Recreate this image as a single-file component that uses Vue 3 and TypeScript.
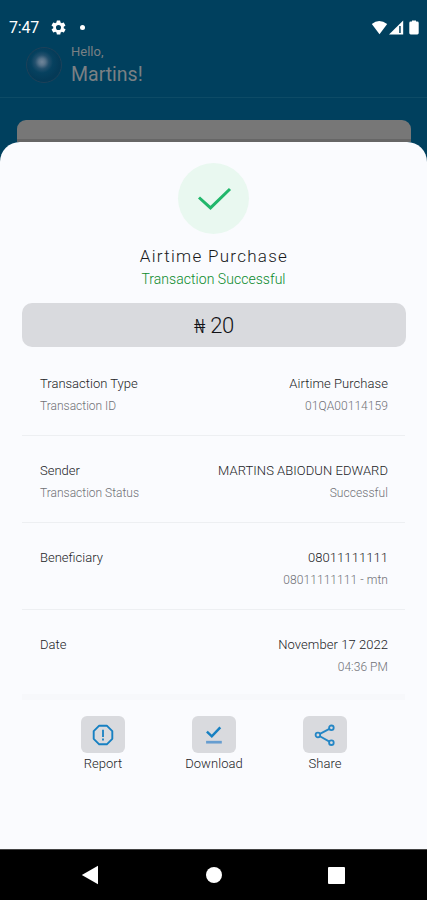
<script setup lang="ts">
interface Detail {
  label: string
  sub: string
  value: string
  subValue: string
  kind: string
}

const details: Detail[] = [
  { label: 'Transaction Type', sub: 'Transaction ID', value: 'Airtime Purchase', subValue: '01QA00114159', kind: 'type' },
  { label: 'Sender', sub: 'Transaction Status', value: 'MARTINS ABIODUN EDWARD', subValue: 'Successful', kind: 'sender' },
  { label: 'Beneficiary', sub: '', value: '08011111111', subValue: '08011111111 - mtn', kind: 'beneficiary' },
  { label: 'Date', sub: '', value: 'November 17 2022', subValue: '04:36 PM', kind: 'date' },
]
</script>

<template>
  <div class="phone">
    <div class="status">
      <span class="clock">7:47</span>
      <svg class="gear" viewBox="0 0 24 24" width="17" height="17">
        <path fill="#fff" fill-rule="evenodd" d="M19.4 13a7.500 7.500 0 0 0 0-2l2.100-1.600a.5.5 0 0 0 .1-.7l-2-3.400a.5.5 0 0 0-.6-.2l-2.500 1a7.300 7.300 0 0 0-1.700-1l-.4-2.600A.5.5 0 0 0 14 2h-4a.5.5 0 0 0-.5.400l-.4 2.700a7.700 7.700 0 0 0-1.700 1l-2.500-1a.5.5 0 0 0-.6.200l-2 3.400a.5.5 0 0 0 .1.700L4.600 11a8 8 0 0 0 0 2l-2.100 1.600a.5.5 0 0 0-.1.700l2 3.400c.1.200.4.300.6.200l2.500-1c.5.400 1.100.700 1.700 1l.4 2.700c0 .2.200.4.500.4h4c.2 0 .5-.2.500-.4l.4-2.700c.6-.3 1.200-.6 1.700-1l2.500 1c.2.100.5 0 .6-.2l2-3.400a.5.5 0 0 0-.1-.7zM12 15.600a3.600 3.600 0 1 1 0-7.200 3.600 3.600 0 0 1 0 7.200z" />
      </svg>
      <span class="dot"></span>
      <svg class="signals" viewBox="0 0 50 16" width="50" height="16">
        <path fill="#fff" d="M.8 4Q8 -1.800 16.200 4L8.500 14.300z" />
        <path fill="#fff" d="M18 14.500 32.200.500V14.500z" />
        <path fill="#00405e" d="M28.200 6h1.500v7h-1.500z" />
        <path fill="#fff" d="M41 1.500V.4h4v1.100h1.300q1.400 0 1.400 1.400v10.200q0 1.400-1.400 1.400h-6.600q-1.400 0-1.400-1.400V2.900q0-1.400 1.400-1.400z" />
      </svg>
    </div>
    <header class="greeting">
      <div class="avatar"></div>
      <div>
        <div class="hello">Hello,</div>
        <div class="name">Martins!</div>
      </div>
    </header>
    <div class="card"></div>

    <main class="sheet">
      <div class="badge">
        <svg viewBox="0 0 71 71" width="71" height="71">
          <path d="M21 34.500 32.500 44.900 52 26" fill="none" stroke="#21b76b" stroke-width="3" />
        </svg>
      </div>
      <h1><span>Airtime Purchase</span></h1>
      <p class="result"><span>Transaction Successful</span></p>
      <div class="amount"><span class="naira">₦</span> 20</div>

      <section class="details">
        <div v-for="d in details" :key="d.label" class="row" :class="d.kind">
          <div class="line"><span class="label">{{ d.label }}</span><span class="value">{{ d.value }}</span></div>
          <div class="line sub"><span class="label">{{ d.sub }}</span><span class="value">{{ d.subValue }}</span></div>
        </div>
      </section>

      <nav class="actions">
        <button class="action" type="button">
          <span class="tile">
            <svg viewBox="0 0 24 24" width="24" height="24" fill="none" stroke="#1780c2">
              <path d="M8.200 2.700h7.600l5.500 5.500v7.600l-5.500 5.500H8.200l-5.500-5.500V8.200z" stroke-width="1.900" stroke-linejoin="round" />
              <path d="M12 6.700v7.200M12 15.600v1.900" stroke-width="1.800" />
            </svg>
          </span>
          <span class="caption">Report</span>
        </button>
        <button class="action" type="button">
          <span class="tile">
            <svg viewBox="0 0 24 24" width="24" height="24" fill="none">
              <path d="M4.900 8.700 9.800 13.300 18.300 4.400" stroke="#1780c2" stroke-width="2.500" />
              <path d="M4.100 19.200h15.700" stroke="#669dd0" stroke-width="2.700" />
            </svg>
          </span>
          <span class="caption">Download</span>
        </button>
        <button class="action" type="button">
          <span class="tile">
            <svg viewBox="0 0 24 24" width="24" height="24" fill="none" stroke="#2486c5" stroke-width="1.800">
              <circle cx="4.900" cy="12" r="2.300" />
              <circle cx="18.400" cy="4.800" r="2.300" />
              <circle cx="18.400" cy="19.700" r="2.300" />
              <path d="M6.900 10.900 16.400 5.900M6.900 13.200 16.400 18.600" />
            </svg>
          </span>
          <span class="caption">Share</span>
        </button>
      </nav>
    </main>

    <footer class="system">
      <svg viewBox="0 0 18 20" width="18" height="20"><path d="M.8 10 17 .800V19.200z" fill="#fff" /></svg>
      <span class="home"></span>
      <span class="recent"></span>
    </footer>
  </div>
</template>

<style>
body {
  background: #00405e;
}
</style>

<style scoped>
.phone {
  width: 427px;
  height: 900px;
  display: flex;
  flex-direction: column;
  overflow: hidden;
  background: #00405e;
  font-family: Roboto, "Liberation Sans", sans-serif;
  white-space: nowrap;
}
.status {
  height: 22px;
  padding: 19px 6px 0 9px;
  display: flex;
  align-items: flex-start;
  color: #fff;
}
.clock {
  font-size: 16px;
  line-height: 18px;
  letter-spacing: -0.200px;
  width: 41px;
}
.gear {
  flex: none;
}
.dot {
  width: 5px;
  height: 5px;
  margin: 5.500px 0 0 12.500px;
  border-radius: 50%;
  background: #fff;
}
.signals {
  margin: 1px 0 0 auto;
}
.greeting {
  height: 57px;
  box-sizing: border-box;
  padding-left: 26px;
  display: flex;
  border-bottom: 1px solid #0d4b66;
  color: #7b8084;
}
.avatar {
  width: 36px;
  height: 36px;
  box-sizing: border-box;
  margin: 6px 9px 0 0;
  border: 1px solid #1d4159;
  border-radius: 50%;
  background: radial-gradient(circle at 44% 41%, #70869a 0, #58748b 12%, #23506d 25%, #06415f 40%, #043a57 65%);
}
.hello {
  margin-top: 3px;
  font-size: 13px;
  line-height: 16px;
}
.name {
  margin-top: 4px;
  font-size: 19.500px;
  line-height: 22px;
}
.card {
  height: 42px;
  margin: 22px 16px -20px 17px;
  border-radius: 9px 9px 0 0;
  background: linear-gradient(#777 0 18.500px, #666 19.500px 22px, transparent 22px);
}
.sheet {
  height: 707px;
  flex: none;
  box-sizing: border-box;
  padding-top: 21px;
  border-radius: 20px 20px 0 0;
  background: #fafbfe;
}
.badge {
  width: 71px;
  height: 71px;
  margin: 0 auto;
  border-radius: 50%;
  background: #e9f8f0;
}
.badge svg {
  display: block;
}
h1 {
  margin: 10px 0 0;
  padding-left: 1px;
  text-align: center;
  font-size: 17px;
  font-weight: 300;
  line-height: 24px;
  letter-spacing: 1.280px;
  color: #18191b;
}
.result {
  margin: 0;
  text-align: center;
  font-size: 14px;
  font-weight: 300;
  line-height: 22px;
  letter-spacing: 0.040px;
  color: #0b8a2c;
}
.amount {
  height: 44px;
  margin: 13px 21px 0 22px;
  border-radius: 10px;
  background: #d9dade;
  text-align: center;
  font-size: 22px;
  font-weight: 300;
  line-height: 46px;
  letter-spacing: -0.300px;
  color: #111216;
}
.naira {
  font-family: "Noto Sans", "Liberation Sans", sans-serif;
  font-size: 20px;
  line-height: 20px;
}
.details {
  margin: 2px 22px 0;
  font-weight: 300;
}
.row {
  height: 87px;
  box-sizing: border-box;
  padding: 24px 17px 0 18px;
  border-bottom: 1px solid #edeff2;
}
.row.date {
  border-bottom: 6px solid #f7f8fb;
  height: 90px;
}
.line {
  display: flex;
  justify-content: space-between;
  font-size: 13px;
  line-height: 22px;
  color: #222326;
}
.line .value {
  letter-spacing: 0.060px;
}
.line.sub {
  font-size: 12px;
  color: #707176;
}
.actions {
  width: 333px;
  margin: 16px 0 0 47.500px;
  display: grid;
  grid-template-columns: repeat(3, 1fr);
}
.action {
  padding: 0;
  border: 0;
  background: none;
  display: flex;
  flex-direction: column;
  align-items: center;
  font: inherit;
}
.tile {
  width: 44px;
  height: 37px;
  display: grid;
  place-items: center;
  border-radius: 6px;
  background: #d9dade;
}
.caption {
  font-size: 13px;
  font-weight: 300;
  line-height: 22px;
  letter-spacing: 0.060px;
  color: #222326;
}
.system {
  flex: 1;
  box-sizing: border-box;
  padding: 0 82px 0 81px;
  border-top: 1px solid #444;
  display: flex;
  align-items: center;
  justify-content: space-between;
  background: #000;
}
.home {
  width: 16px;
  height: 16px;
  border-radius: 50%;
  background: #fff;
}
.recent {
  width: 17px;
  height: 17px;
  border-radius: 1px;
  background: #fff;
}
</style>
